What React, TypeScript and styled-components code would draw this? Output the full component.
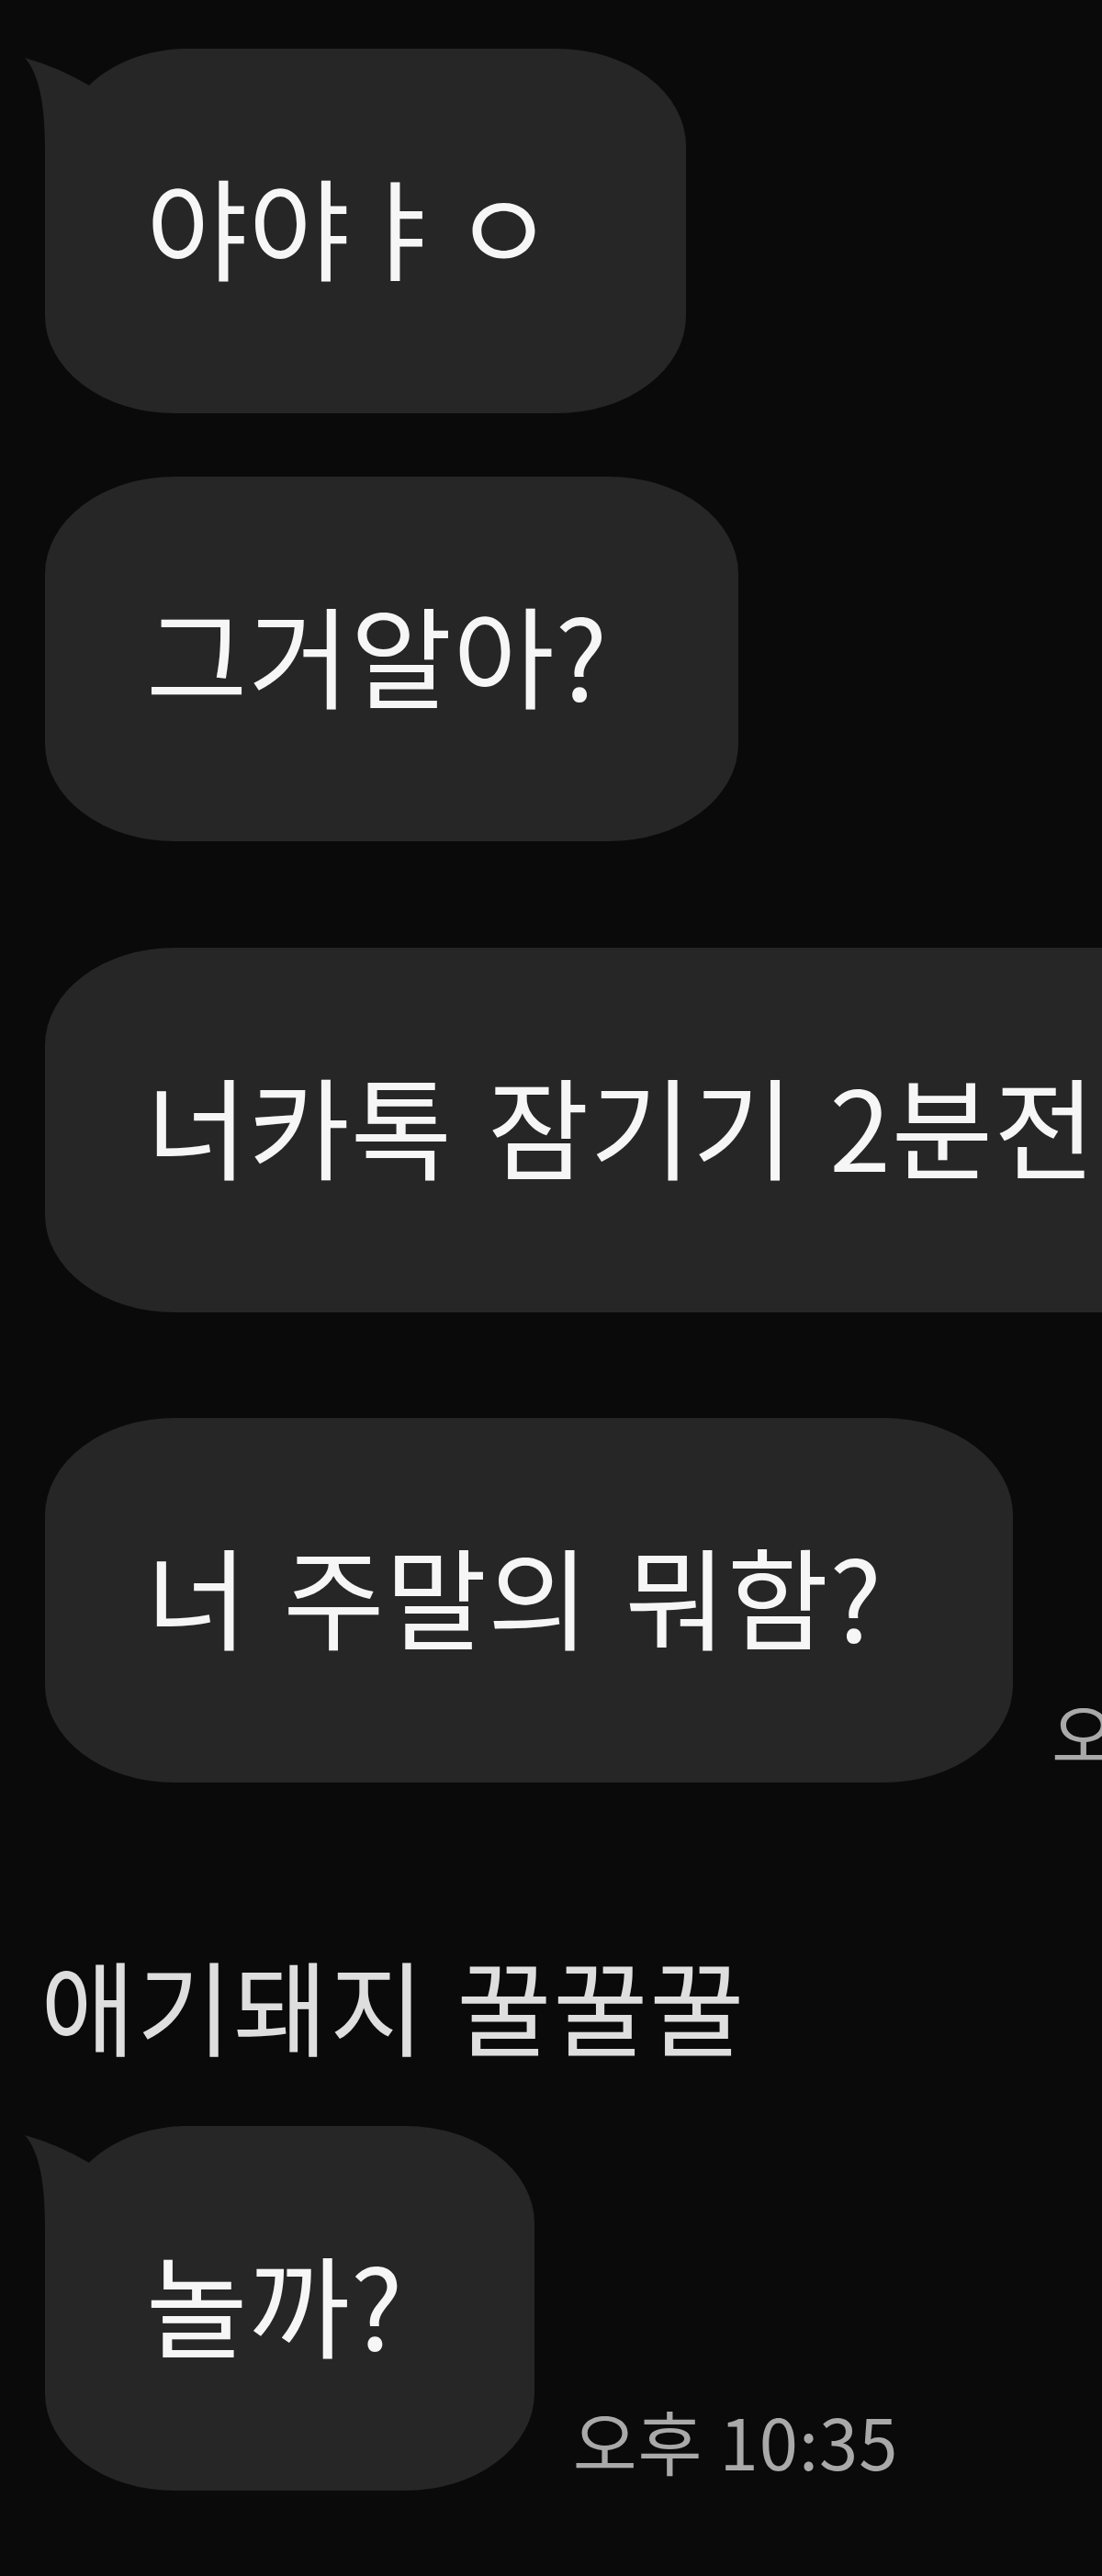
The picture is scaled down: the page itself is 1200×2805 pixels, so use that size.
import React from "react";
import styled, { createGlobalStyle } from "styled-components";

const GlobalStyle = createGlobalStyle`
  html, body {
    margin: 0;
    padding: 0;
    background: #0a0a0a;
    overflow: hidden;
  }
  body {
    font-family: "Noto Sans CJK KR", "Noto Sans", sans-serif;
  }
`;

const Page = styled.main`
  box-sizing: border-box;
  min-height: 2805px;
  width: 1200px;
  padding: 53px 0 0 49px;
  display: flex;
  flex-direction: column;
  align-items: flex-start;
  background: #0a0a0a;
  overflow: hidden;
`;

const Row = styled.div<{ $top: number }>`
  display: flex;
  align-items: flex-end;
  gap: 42px;
  margin-top: ${(p) => p.$top}px;
  flex-shrink: 0;
`;

const Bubble = styled.div<{ $tail?: boolean }>`
  position: relative;
  flex-shrink: 0;
  background: #262626;
  border-radius: 141px / 106px;
  ${(p) => (p.$tail ? "border-top-left-radius: 200px 200px;" : "")}
  padding: 107px 142px 119px 110px;
  font-size: 120px;
  line-height: 171px;
  letter-spacing: 1px;
  word-spacing: 10px;
  color: #f6f6f6;
  white-space: nowrap;
`;

const BubbleText = styled.span`
  position: relative;
`;

const TailSvg = styled.svg`
  position: absolute;
  left: -24px;
  top: 0;
  width: 250px;
  height: 230px;
  display: block;
`;

const Time = styled.span`
  flex-shrink: 0;
  font-size: 76px;
  letter-spacing: 1px;
  color: #a9a9a9;
  white-space: nowrap;
`;

const Sender = styled.div<{ $top: number }>`
  margin-top: ${(p) => p.$top}px;
  margin-left: -5px;
  font-size: 112px;
  line-height: 130px;
  letter-spacing: 2px;
  word-spacing: 6px;
  color: #dedede;
  white-space: nowrap;
`;

const Tail = () => (
  <TailSvg viewBox="-24 0 250 230" aria-hidden="true">
    <path
      d="M -22 10 Q 14 20 48 40 C 66 22 100 2 150 0 L 226 0 L 226 230 L 0 230 L 0 110 C 0 62 -6 28 -22 10 Z"
      fill="#262626"
    />
  </TailSvg>
);

type Msg = { text: string; top: number; tail?: boolean; time?: string };

const first: Msg[] = [
  { text: "야야ㅑㅇ", top: 0, tail: true },
  { text: "그거알아?", top: 69 },
  { text: "너카톡 잠기기 2분전", top: 116 },
  { text: "너 주말의 뭐함?", top: 115, time: "오후 10:35" },
];

const second: Msg[] = [{ text: "놀까?", top: 68, tail: true, time: "오후 10:35" }];

const Message = ({ m }: { m: Msg }) => (
  <Row $top={m.top}>
    <Bubble $tail={m.tail}>
      {m.tail && <Tail />}
      <BubbleText>{m.text}</BubbleText>
    </Bubble>
    {m.time && <Time>{m.time}</Time>}
  </Row>
);

export default function App() {
  return (
    <>
      <GlobalStyle />
      <Page>
        {first.map((m, i) => (
          <Message key={i} m={m} />
        ))}
        <Sender $top={176}>애기돼지 꿀꿀꿀</Sender>
        {second.map((m, i) => (
          <Message key={i} m={m} />
        ))}
      </Page>
    </>
  );
}
